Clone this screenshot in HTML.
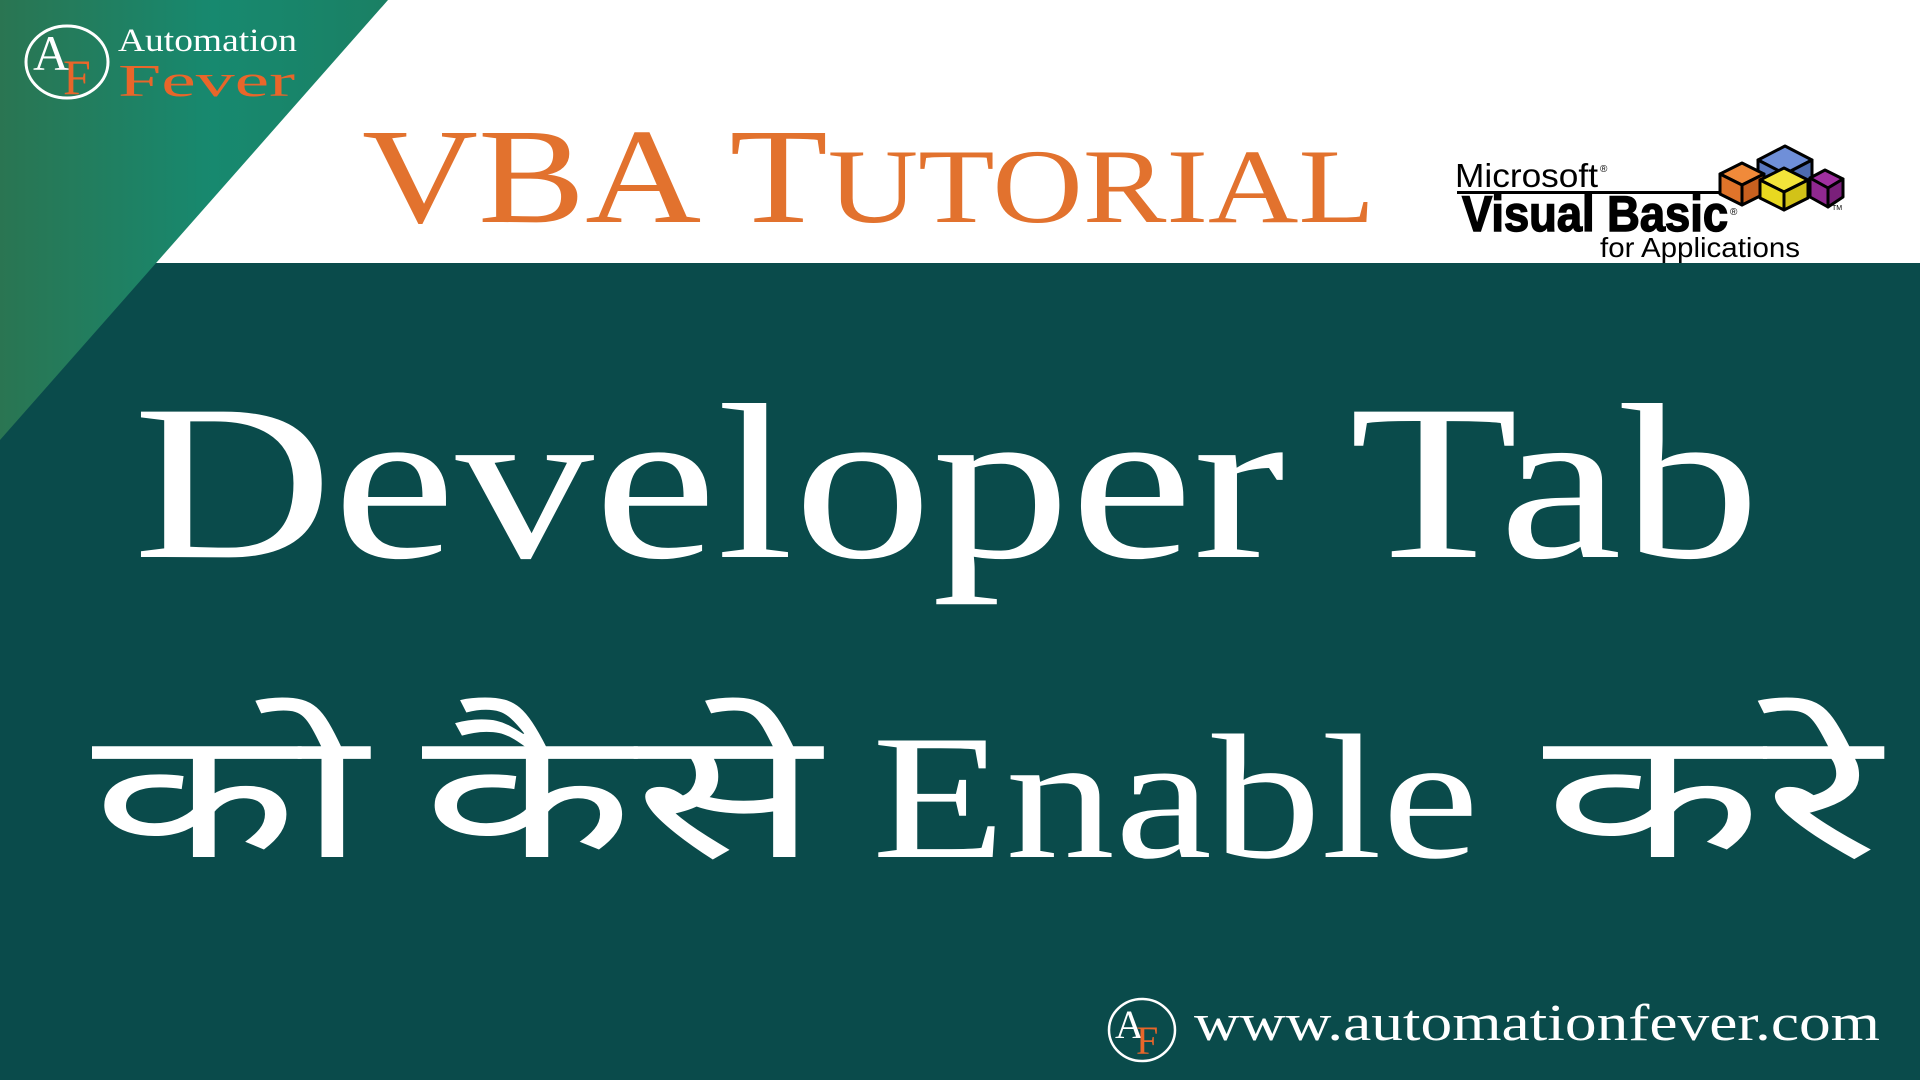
<!DOCTYPE html>
<html><head><meta charset="utf-8"><style>
html,body{margin:0;padding:0;width:1920px;height:1080px;overflow:hidden;background:#0a4b4b}
svg{display:block}
</style></head><body>
<svg width="1920" height="1080" viewBox="0 0 1920 1080" xmlns="http://www.w3.org/2000/svg">
<defs>
<linearGradient id="g" x1="0" y1="0" x2="1" y2="0">
<stop offset="0" stop-color="#2a7552"/><stop offset="0.55" stop-color="#17896f"/><stop offset="1" stop-color="#1a8064"/>
</linearGradient>
</defs>
<rect width="1920" height="1080" fill="#0a4b4b"/>
<rect width="1920" height="263" fill="#ffffff"/>
<polygon points="0,0 388,0 0,440" fill="url(#g)"/>
<!-- top logo -->
<ellipse cx="67" cy="62" rx="41" ry="36" fill="none" stroke="#fff" stroke-width="3"/>
<text x="33" y="70" font-family="Liberation Serif,serif" font-size="50" fill="#fff">A</text>
<text x="63" y="94" font-family="Liberation Serif,serif" font-size="50" fill="#e8662a">F</text>
<text x="118" y="51" font-family="Liberation Serif,serif" font-size="33" fill="#fff" textLength="179" lengthAdjust="spacingAndGlyphs">Automation</text>
<text x="118" y="96" font-family="Liberation Serif,serif" font-size="46" fill="#e8662a" textLength="177" lengthAdjust="spacingAndGlyphs">Fever</text>
<!-- title -->
<text x="362" y="222" font-family="Liberation Serif,serif" font-size="136" fill="#e2722e" textLength="1013" lengthAdjust="spacingAndGlyphs">VBA T<tspan font-size="106">UTORIAL</tspan></text>
<!-- VBA logo -->
<text x="1455" y="187" font-family="Liberation Sans,sans-serif" font-size="33" fill="#000" textLength="143" lengthAdjust="spacingAndGlyphs">Microsoft</text>
<text x="1600" y="172" font-family="Liberation Sans,sans-serif" font-size="10" fill="#000">®</text>
<rect x="1457" y="191" width="265" height="3" fill="#000"/>
<text x="1462" y="231" font-family="Liberation Sans,sans-serif" font-weight="bold" font-size="50" fill="#000" textLength="266" lengthAdjust="spacingAndGlyphs" stroke="#000" stroke-width="1.5">Visual Basic</text>
<text x="1730" y="215" font-family="Liberation Sans,sans-serif" font-size="10" fill="#000">®</text>
<text x="1600" y="257" font-family="Liberation Sans,sans-serif" font-size="28" fill="#000" textLength="200" lengthAdjust="spacingAndGlyphs">for Applications</text>
<text x="1832" y="210" font-family="Liberation Sans,sans-serif" font-size="7" fill="#000">TM</text>
<g stroke="#000" stroke-width="3" stroke-linejoin="round">
<polygon points="1758,160 1785,146 1812,160 1785,174" fill="#6f8fd8"/>
<polygon points="1758,160 1785,174 1785,192 1758,178" fill="#5a78c0"/>
<polygon points="1812,160 1785,174 1785,192 1812,178" fill="#4d6bb0"/>
<polygon points="1720,174 1742,163 1764,174 1742,185" fill="#f08a3a"/>
<polygon points="1720,174 1742,185 1742,205 1720,194" fill="#e0742a"/>
<polygon points="1764,174 1742,185 1742,205 1764,194" fill="#c8601f"/>
<polygon points="1810,178 1825,170 1843,179 1828,188" fill="#a030a0"/>
<polygon points="1810,178 1828,188 1828,207 1810,197" fill="#902890"/>
<polygon points="1843,179 1828,188 1828,207 1843,197" fill="#7a207a"/>
<polygon points="1760,180 1784,168 1808,180 1784,192" fill="#f3e43a"/>
<polygon points="1760,180 1784,192 1784,210 1760,198" fill="#e8d820"/>
<polygon points="1808,180 1784,192 1784,210 1808,198" fill="#d2c218"/>
</g>
<!-- main text -->
<text x="133" y="557" font-family="Liberation Serif,serif" font-size="222" fill="#fff" textLength="1627" lengthAdjust="spacingAndGlyphs">Developer Tab</text>
<g font-family="Liberation Serif,serif" font-size="178" fill="#fff">
<text x="92" y="857" textLength="275" lengthAdjust="spacingAndGlyphs">को</text>
<text x="422" y="857" textLength="398" lengthAdjust="spacingAndGlyphs">कैसे</text>
<text x="872" y="857" textLength="607" lengthAdjust="spacingAndGlyphs">Enable</text>
<text x="1543" y="857" textLength="337" lengthAdjust="spacingAndGlyphs">करे</text>
</g>
<!-- footer -->
<ellipse cx="1142" cy="1030" rx="33" ry="31" fill="none" stroke="#fff" stroke-width="2.5"/>
<text x="1115" y="1038" font-family="Liberation Serif,serif" font-size="40" fill="#fff">A</text>
<text x="1136" y="1054" font-family="Liberation Serif,serif" font-size="40" fill="#e8662a">F</text>
<text x="1194" y="1040" font-family="Liberation Serif,serif" font-size="52" fill="#fff" textLength="686" lengthAdjust="spacingAndGlyphs">www.automationfever.com</text>
</svg>
</body></html>
